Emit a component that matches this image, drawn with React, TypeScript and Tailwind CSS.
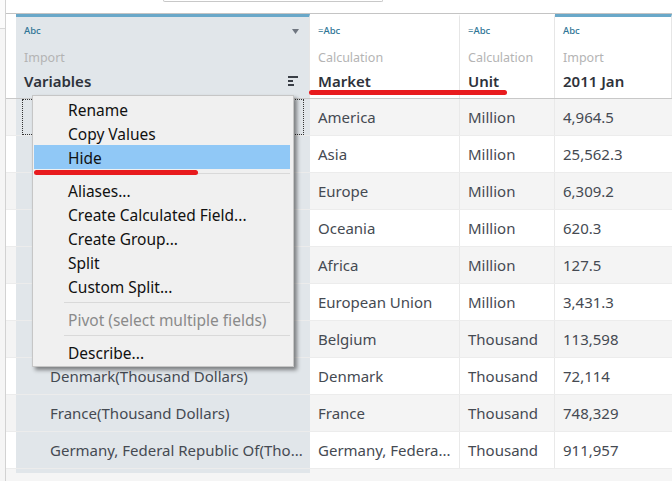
const font = { fontFamily: '"Noto Sans", sans-serif' };

type Row = { name: string; market: string; unit: string; value: string };
const rows: Row[] = [
  { name: "", market: "America", unit: "Million", value: "4,964.5" },
  { name: "", market: "Asia", unit: "Million", value: "25,562.3" },
  { name: "", market: "Europe", unit: "Million", value: "6,309.2" },
  { name: "", market: "Oceania", unit: "Million", value: "620.3" },
  { name: "", market: "Africa", unit: "Million", value: "127.5" },
  { name: "", market: "European Union", unit: "Million", value: "3,431.3" },
  { name: "", market: "Belgium", unit: "Thousand", value: "113,598" },
  { name: "Denmark(Thousand Dollars)", market: "Denmark", unit: "Thousand", value: "72,114" },
  { name: "France(Thousand Dollars)", market: "France", unit: "Thousand", value: "748,329" },
  { name: "Germany, Federal Republic Of(Tho...", market: "Germany, Federa...", unit: "Thousand", value: "911,957" },
];

function Header({ type, source, name, w, accent, selected, children }: { type: string; source: string; name: string; w: string; accent?: boolean; selected?: boolean; children?: React.ReactNode }) {
  return (
    <div className={`${w} relative h-full shrink-0 flex flex-col border-r border-[#e6e6e6] ${selected ? "bg-[#e1e6ea]" : "bg-white"} ${accent ? "border-t-[3px] border-t-[#69a8c9]" : "border-t-[3px] border-t-transparent"}`}>
      <div className="pl-2 pt-[7px] h-[27px] text-[9.5px] leading-[14px] font-medium text-[#2f7596]">{type}</div>
      <div className="pl-2 mt-[4px] text-[12.5px] leading-[20px] text-[#b4b4b4]">{source}</div>
      <div className="pl-2 mt-[3px] text-[15px] leading-[20px] font-semibold text-[#2e323a]">{name}</div>
      {children}
    </div>
  );
}

function MenuItem({ label, active, disabled }: { label: string; active?: boolean; disabled?: boolean }) {
  return (
    <div className={`h-[24px] pl-[34px] text-[15.5px] leading-[26px] mr-[3px] ml-[1px] ${active ? "bg-[#90c8f6]" : ""} ${disabled ? "text-[#8a8a8a]" : "text-[#111]"}`}>
      {label}
    </div>
  );
}

function Sep() {
  return <div className="h-px bg-[#d9d9d9] ml-[31px] mr-[3px] my-[4px]" />;
}

export default function App() {
  const cell = "text-[15px] leading-[36px] text-[#454a52] whitespace-nowrap overflow-hidden";
  return (
    <div className="relative flex w-[672px] h-[481px] overflow-hidden bg-[#f5f5f5]" style={font}>
      <div className="w-[6px] shrink-0 border-r border-[#d2d2d2]">
        <div className="h-[29px] bg-[#fbfbfb] border-b border-[#d8d8d8]" />
      </div>

      <div className="flex-1 min-w-0">
        <div className="h-[14px] bg-white border-b border-[#c4c4c4] pl-[157px]">
          <div className="w-[220px] h-[2px] border border-t-0 border-[#c8c8c8] rounded-b-[2px]" />
        </div>

        <div className="flex h-[85px] bg-white border-b border-[#c8c8c8]">
          <div className="w-[10px] shrink-0" />
          <Header w="w-[294px]" type="Abc" source="Import" name="Variables" accent selected>
            <svg className="absolute right-[10px] top-[12px]" width="7" height="5" viewBox="0 0 7 5"><path d="M0 0h7L3.5 5z" fill="#6f7680" /></svg>
            <svg className="absolute right-[11px] top-[59px]" width="10" height="10" viewBox="0 0 10 10"><path d="M0 0h10v2H0zM0 4h5v2H0zM0 8h6v2H0z" fill="#3a3f47" /></svg>
          </Header>
          <Header w="w-[150px]" type="=Abc" source="Calculation" name="Market" />
          <Header w="w-[95px]" type="=Abc" source="Calculation" name="Unit" />
          <Header w="flex-1" type="Abc" source="Import" name="2011 Jan" accent />
        </div>

        <div className="flex flex-col">
          {rows.map((r, i) => (
            <div key={i} className={`flex h-[37px] border-b border-[#ececec] ${i % 2 === 0 ? "bg-[#f4f4f4]" : "bg-white"}`}>
              <div className="w-[10px] shrink-0" />
              <div className={`w-[294px] shrink-0 bg-[#e1e6ea] pl-[34px] ${cell}`}>{r.name}</div>
              <div className={`w-[150px] shrink-0 border-r border-[#e9e9e9] pl-2 ${cell}`}>{r.market}</div>
              <div className={`w-[95px] shrink-0 border-r border-[#e9e9e9] pl-2 ${cell}`}>{r.unit}</div>
              <div className={`flex-1 pl-2 ${cell}`}>{r.value}</div>
            </div>
          ))}
          <div className="ml-[10px] w-[294px] h-[4px] bg-[#e1e6ea]" />
        </div>
      </div>

      <div className="absolute left-[22px] top-[99px] w-[282px] h-[36px] border border-dotted border-[#333]" />

      <div className="absolute left-[32px] top-[95px] w-[262px] h-[272px] bg-[#f0f0f0] border border-[#c6c6c6] shadow-[3px_3px_4px_rgba(0,0,0,0.45)] pt-[1px]">
        <MenuItem label="Rename" />
        <MenuItem label="Copy Values" />
        <MenuItem label="Hide" active />
        <Sep />
        <MenuItem label="Aliases..." />
        <MenuItem label="Create Calculated Field..." />
        <MenuItem label="Create Group..." />
        <MenuItem label="Split" />
        <MenuItem label="Custom Split..." />
        <Sep />
        <MenuItem label="Pivot (select multiple fields)" disabled />
        <Sep />
        <MenuItem label="Describe..." />
      </div>

      <div className="absolute left-[309px] top-[90px] w-[198px] h-[5px] rounded-full bg-[#e81b1e]" />
      <div className="absolute left-[34px] top-[170px] w-[164px] h-[5px] rounded-full bg-[#e81b1e]" />
    </div>
  );
}
